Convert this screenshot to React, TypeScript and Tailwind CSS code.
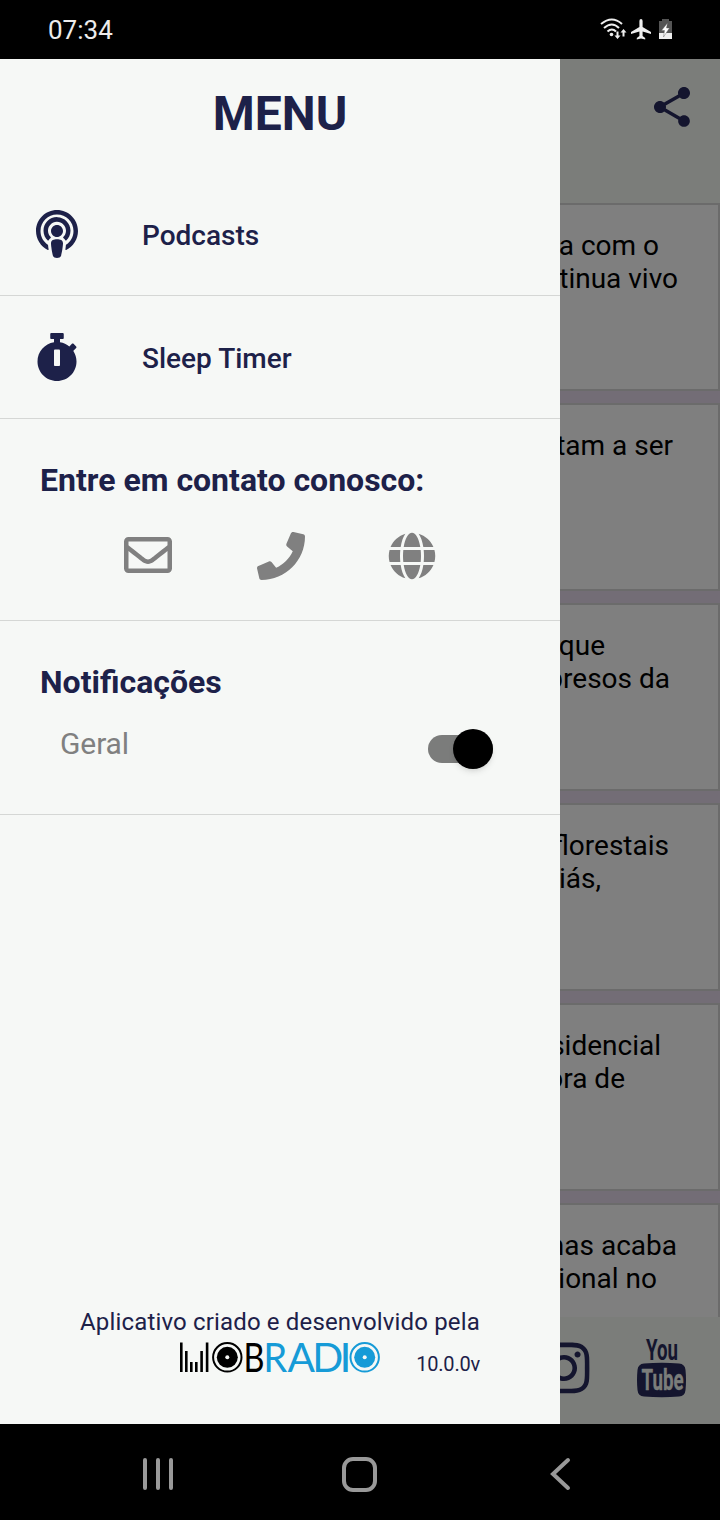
import { FaGlobe, FaInstagram, FaPhone, FaPodcast, FaRegEnvelope, FaStopwatch } from "react-icons/fa";
import { MdShare } from "react-icons/md";

const news = [
	[{ text: "a com o", end: 61 }, { text: "tinua vivo", end: 42 }],
	[{ text: "tam a ser", end: 47 }],
	[{ text: "que", end: 115 }, { text: "presos da", end: 50 }],
	[{ text: "florestais", end: 51 }, { text: "iás,", end: 119 }],
	[{ text: "sidencial", end: 59 }, { text: "ora de", end: 95 }],
	[{ text: "nas acaba", end: 43 }, { text: "ional no", end: 63 }],
];

function StatusBar() {
	return (
		<div className="flex h-[59px] items-center justify-between bg-black pt-0.5 pr-[44px] pl-12 text-[26px] text-[#ececec]">
			<span>07:34</span>
			<svg className="-mt-[3px]" width="76" height="24" viewBox="0 0 76 24" fill="none" stroke="#eee" strokeWidth="2">
				<path d="M1 7Q12 -2 22 7M4 11Q12 4 19 11M7.500 14.500Q12 10.500 16 14.500" />
				<circle cx="11.500" cy="17.500" r="1.800" fill="#eee" stroke="none" />
				<path d="M17.500 22l-3-3.500h2v-4h2v4h2zM23.500 12l3 3.500h-2v4h-2v-4h-2z" fill="#eee" stroke="none" />
				<path d="M41 2q-1.6 0-1.6 2v6L31 15v2l8.400-2.500v4.500l-2.600 2v1.500l4.200-1 4.200 1v-1.500l-2.600-2v-4.500L51 17v-2l-8.400-5V4q0-2-1.600-2z" fill="#eee" stroke="none" />
				<path d="M59 4h3V2h7v2h3v12H59z" fill="#555" stroke="none" />
				<path d="M59 16h13v6H59z" fill="#eee" stroke="none" />
				<path d="M67.500 6l-6 7.500h3l-1 6.500 6-9h-3z" fill="#fff" stroke="#555" strokeWidth="0.400" />
			</svg>
		</div>
	);
}

function MobRadioLogo() {
	return (
		<svg className="block" width="200" height="31" viewBox="0 0 200 31" fontFamily="Lato, sans-serif" fontSize="41">
			<path d="M0 0.500h2.600v29.500H0zM5 9h2.600v21H5zM10 20h2.600v10H10zM15 20h2.600v10H15zM20.300 9h2.600v21h-2.600zM25.800 0.500h2.600v29.500h-2.600z" />
			<circle cx="47.300" cy="15.300" r="14.200" fill="none" stroke="#000" strokeWidth="2" />
			<circle cx="47.300" cy="15.300" r="10.500" />
			<circle cx="47.300" cy="15.300" r="2" fill="#f6f8f6" />
			<text x="63.500" y="30" textLength="21" lengthAdjust="spacingAndGlyphs">B</text>
			<g fill="#169bd7">
				<text x="83.300" y="30" textLength="24" lengthAdjust="spacingAndGlyphs">R</text>
				<text x="107.500" y="30" textLength="27.500" lengthAdjust="spacingAndGlyphs">A</text>
				<text x="132.300" y="30" textLength="31" lengthAdjust="spacingAndGlyphs">D</text>
				<text x="159.500" y="30" textLength="12" lengthAdjust="spacingAndGlyphs">I</text>
			</g>
			<circle cx="184.700" cy="15.300" r="14.200" fill="none" stroke="#169bd7" strokeWidth="2" />
			<circle cx="184.700" cy="15.300" r="10.500" fill="#169bd7" />
			<circle cx="184.700" cy="15.300" r="2" fill="#f6f8f6" />
		</svg>
	);
}

function Drawer() {
	return (
		<aside className="flex w-[560px] shrink-0 flex-col bg-[#f6f8f6] text-[#1d2149]">
			<h1 className="h-[113px] pt-[27px] text-center text-[48px] leading-[56px] font-bold">MENU</h1>
			<div className="flex h-[124px] items-center border-b border-[#d5d7d5] pl-[33px] text-[28px] font-medium">
				<FaPodcast size={48} />
				<span className="mt-1 ml-[61px]">Podcasts</span>
			</div>
			<div className="flex h-[123px] items-center border-b border-[#d5d7d5] pl-[33px] text-[28px] font-medium">
				<FaStopwatch size={48} />
				<span className="mt-1 ml-[61px]">Sleep Timer</span>
			</div>
			<div className="h-[202px] border-b border-[#d5d7d5] pt-[42px]">
				<h2 className="pl-10 text-[32px] leading-[38px] font-bold">Entre em contato conosco:</h2>
				<div className="mt-8 flex pl-[124px] text-[#808080]">
					<FaRegEnvelope size={48} />
					<FaPhone size={48} className="mt-px ml-[85px]" />
					<FaGlobe size={48} className="mt-px ml-[83px]" />
				</div>
			</div>
			<div className="h-[194px] border-b border-[#d5d7d5] pt-[42px]">
				<h2 className="pl-10 text-[32px] leading-[38px] font-bold">Notificações</h2>
				<div className="mt-[23px] flex items-center justify-between pr-[67px] pl-[60px]">
					<span className="text-[30px] leading-[40px] tracking-[-0.1px] text-[#808080]">Geral</span>
					<div className="mt-2.5 flex h-7 w-[65px] items-center justify-end rounded-full bg-[#7b7c7b]">
						<div className="size-10 shrink-0 rounded-full bg-black shadow-md" />
					</div>
				</div>
			</div>
			<footer className="mt-auto h-[117px] px-20">
				<p className="text-[24px] leading-[30px] tracking-[0.16px] whitespace-nowrap">Aplicativo criado e desenvolvido pela</p>
				<div className="mt-[5px] flex justify-between pl-[100px]">
					<MobRadioLogo />
					<span className="mt-2.5 text-[20px] leading-6 tracking-[-0.2px]">10.0.0v</span>
				</div>
			</footer>
		</aside>
	);
}

function Feed() {
	return (
		<section className="flex min-w-0 flex-1 flex-col overflow-hidden bg-[#736d76]">
			<header className="flex h-36 shrink-0 justify-end bg-[#7b7d7a] pt-6 pr-6 text-[#14152e]">
				<MdShare size={48} />
			</header>
			<div className="flex min-h-0 flex-1 flex-col gap-3 overflow-hidden">
				{news.map((lines, i) => (
					<div key={i} className="h-[188px] shrink-0 border-y-2 border-r-2 border-[#6b6b6b] bg-[#7f7f7f] pt-6 text-[28px] leading-[33px] text-black">
						{lines.map((line) => (
							<p key={line.text} className="flex justify-end whitespace-nowrap" style={{ paddingRight: line.end - 2 }}>
								{line.text}
							</p>
						))}
					</div>
				))}
			</div>
			<footer className="flex h-[107px] shrink-0 bg-[#7b7d7a] text-[#14152e]">
				<FaInstagram size={58} className="mt-[21.5px] -ml-[25.5px] shrink-0" />
				<svg className="mt-5 ml-[44.5px] shrink-0" width="50" height="62" viewBox="0 0 50 62" fill="currentColor" fontFamily="Roboto, sans-serif" fontWeight="700">
					<text x="9" y="22.500" fontSize="30" textLength="32" lengthAdjust="spacingAndGlyphs">You</text>
					<path d="M7 26.500Q25 25 42 26.500Q48 27 48.500 33Q49.500 43 48.500 53Q48 59 42 59.500Q25 61 7 59.500Q1 59 0.500 53Q-0.500 43 0.500 33Q1 27 7 26.500Z" />
					<text x="4.500" y="53" fontSize="30" fill="#7b7d7a" stroke="#7b7d7a" strokeWidth="0.400" textLength="42" lengthAdjust="spacingAndGlyphs">Tube</text>
				</svg>
			</footer>
		</section>
	);
}

export default function App() {
	return (
		<main className="flex h-[1520px] w-[720px] flex-col overflow-hidden bg-black font-[Roboto,sans-serif]">
			<StatusBar />
			<div className="flex h-[1365px]">
				<Drawer />
				<Feed />
			</div>
			<nav className="flex h-24 items-center pt-1 pl-[142px]">
				<svg width="32" height="36" viewBox="0 0 32 36" stroke="#999" strokeWidth="4" strokeLinecap="round">
					<path d="M3 4v28M16 4v28M29 4v28" />
				</svg>
				<div className="ml-[168px] size-[35px] rounded-[11px] border-4 border-[#999]" />
				<svg className="ml-[172px]" width="22" height="36" viewBox="0 0 22 36" fill="none" stroke="#999" strokeWidth="4" strokeLinecap="round">
					<path d="M19 4L4 18l15 14" />
				</svg>
			</nav>
		</main>
	);
}
